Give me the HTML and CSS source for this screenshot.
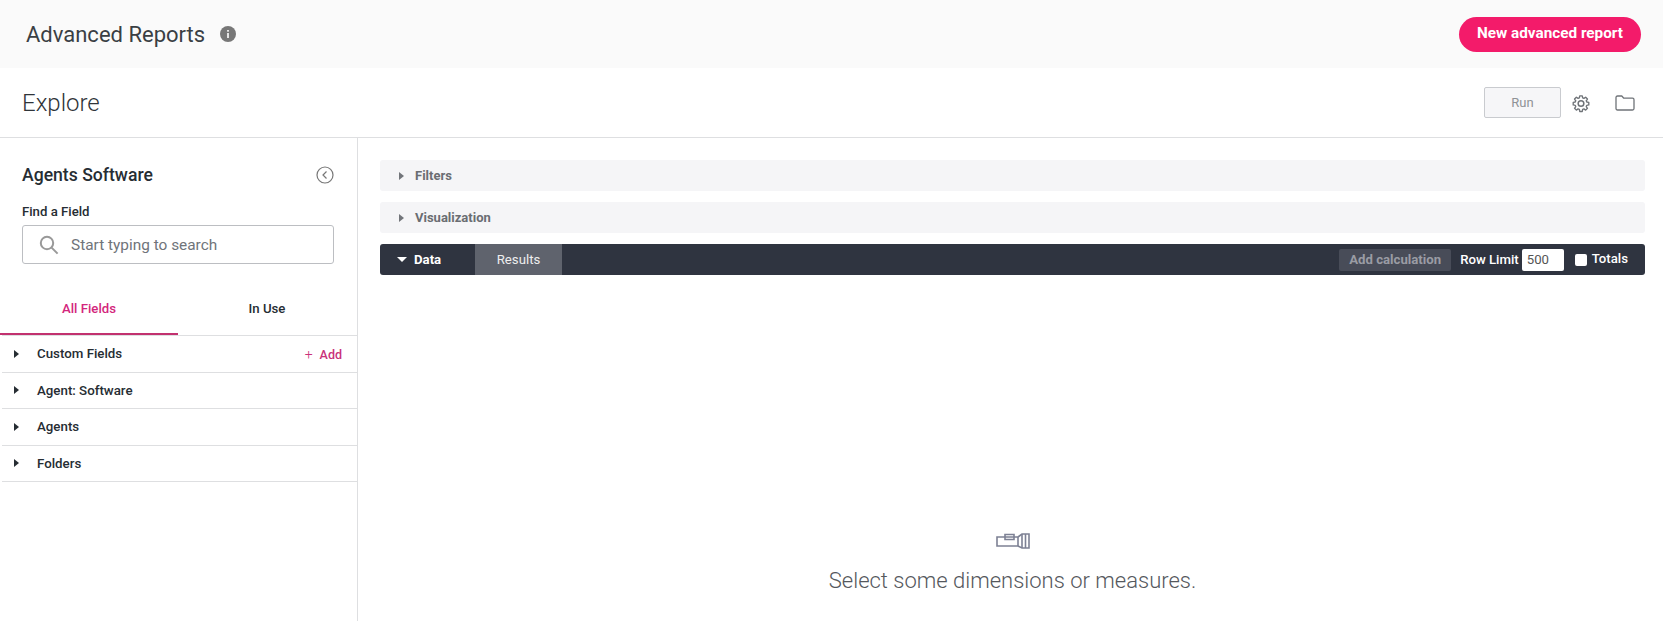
FILE: index.html
```html
<!DOCTYPE html>
<html lang="en">
<head>
  <meta charset="UTF-8">
  <meta name="viewport" content="width=device-width, initial-scale=1.0">
  <title>Advanced Reports</title>
  <link rel="stylesheet" href="styles.css">
</head>
<body>
  <div class="topbar">
    <div class="topbar-title">
      <h1>Advanced Reports</h1>
      <svg class="info" width="16" height="16" viewBox="0 0 16 16">
        <circle cx="8" cy="8" r="8" fill="#777"/>
        <rect x="7.2" y="7" width="1.6" height="5" fill="#fff"/>
        <rect x="7.2" y="4" width="1.6" height="1.7" fill="#fff"/>
      </svg>
    </div>
    <button class="new-report">New advanced report</button>
  </div>

  <div class="explore-bar">
    <h2>Explore</h2>
    <div class="explore-actions">
      <button class="run">Run</button>
      <svg class="gear" width="20" height="20" viewBox="0 0 24 24" fill="none" stroke="#6f7378" stroke-width="1.8" stroke-linejoin="round">
        <path d="M10.3 2.5h3.4l.5 2.7 1.7.7 2.3-1.6 2.4 2.4-1.6 2.3.7 1.7 2.7.5v3.4l-2.7.5-.7 1.7 1.6 2.3-2.4 2.4-2.3-1.6-1.7.7-.5 2.7h-3.4l-.5-2.7-1.7-.7-2.3 1.6-2.4-2.4 1.6-2.3-.7-1.7-2.7-.5v-3.4l2.7-.5.7-1.7-1.6-2.3 2.4-2.4 2.3 1.6 1.7-.7z" transform="translate(1.2 1.2) scale(.9)"/>
        <circle cx="12" cy="12.6" r="3.4"/>
      </svg>
      <svg class="folder" width="20" height="16" viewBox="0 0 20 16" fill="none" stroke="#6f7378" stroke-width="1.3" stroke-linejoin="round">
        <path d="M1 2.5c0-.8.6-1.5 1.5-1.5h4.3l2 2.2h8.7c.8 0 1.5.7 1.5 1.5v8.8c0 .8-.7 1.5-1.5 1.5h-15c-.9 0-1.5-.7-1.5-1.5z"/>
      </svg>
    </div>
  </div>

  <div class="content">
    <aside class="sidebar">
      <div class="sidebar-head">
        <div class="sidebar-title">
          <h3>Agents Software</h3>
          <svg width="18" height="18" viewBox="0 0 18 18" fill="none" stroke="#777" stroke-width="1.2">
            <circle cx="9" cy="9" r="8"/>
            <path d="M10.5 5.5 7 9l3.5 3.5"/>
          </svg>
        </div>
        <label class="find-label">Find a Field</label>
        <div class="search">
          <svg width="20" height="20" viewBox="0 0 20 20" fill="none" stroke="#999" stroke-width="2">
            <circle cx="8" cy="8" r="6.2"/>
            <path d="m12.6 12.6 6 6"/>
          </svg>
          <span>Start typing to search</span>
        </div>
      </div>
      <div class="tabs">
        <div class="tab active">All Fields</div>
        <div class="tab">In Use</div>
      </div>
      <ul class="fields">
        <li><span class="arrow"></span>Custom Fields<span class="add"><span class="plus">+</span>Add</span></li>
        <li><span class="arrow"></span>Agent: Software</li>
        <li><span class="arrow"></span>Agents</li>
        <li><span class="arrow"></span>Folders</li>
      </ul>
    </aside>

    <main class="main">
      <div class="panel"><span class="arrow grey"></span>Filters</div>
      <div class="panel"><span class="arrow grey"></span>Visualization</div>
      <div class="data-bar">
        <div class="data-tab"><span class="arrow-down"></span>Data</div>
        <div class="results-tab">Results</div>
        <div class="data-tools">
          <button class="add-calc">Add calculation</button>
          <span class="row-limit">Row Limit</span>
          <div class="limit-input">500</div>
          <span class="check"></span>
          <span class="totals">Totals</span>
        </div>
      </div>
      <div class="empty">
        <svg width="34" height="16" viewBox="0 0 34 16" fill="none" stroke="#7d8194" stroke-width="1.6">
          <path d="M1 4h21v9H1z"/>
          <path d="M9 4V1.5h9V6.5H9z"/>
          <path d="M22 4l4-3h7v14h-7l-4-2"/>
          <path d="M26 1v14M29.5 1v14"/>
        </svg>
        <p>Select some dimensions or measures.</p>
      </div>
    </main>
  </div>
</body>
</html>
```

FILE: styles.css
```css
* {
  box-sizing: border-box;
}
html, body {
  height: 100%;
}
body {
  margin: 0;
  display: flex;
  flex-direction: column;
  overflow: hidden;
  font-family: Roboto, "Liberation Sans", sans-serif;
  color: #262d33;
  background: #fff;
}
h1, h2, h3, p, ul {
  margin: 0;
  padding: 0;
}
button {
  font-family: inherit;
}

.topbar {
  height: 68px;
  flex: none;
  display: flex;
  align-items: center;
  justify-content: space-between;
  padding: 0 22px 0 26px;
  background: #fafafa;
}
.topbar-title {
  display: flex;
  align-items: center;
}
.topbar h1 {
  font-size: 22px;
  font-weight: 400;
  color: #3a3f44;
}
.info {
  margin-left: 15px;
}
.new-report {
  width: 182px;
  height: 35px;
  padding: 0 0 2px;
  border: none;
  border-radius: 18px;
  background: #f31b6a;
  color: #fff;
  font-size: 15.3px;
  font-weight: 700;
}

.explore-bar {
  height: 70px;
  flex: none;
  display: flex;
  align-items: center;
  justify-content: space-between;
  padding: 0 28px 0 22px;
  border-bottom: 1px solid #dedfe1;
}
.explore-bar h2 {
  font-size: 24px;
  font-weight: 300;
  color: #2f3439;
}
.explore-actions {
  display: flex;
  align-items: center;
}
.run {
  width: 77px;
  height: 31px;
  border: 1px solid #c9cbcf;
  border-radius: 2px;
  background: #f6f6f8;
  color: #8f9296;
  font-size: 13px;
}
.gear {
  margin-left: 10px;
}
.folder {
  margin-left: 24px;
}

.content {
  flex: 1;
  display: flex;
  min-height: 0;
}

.sidebar {
  width: 358px;
  flex: none;
  border-right: 1px solid #dedfe1;
}
.sidebar-head {
  padding: 26px 23px 0 22px;
}
.sidebar-title {
  display: flex;
  align-items: center;
  justify-content: space-between;
  height: 22px;
}
.sidebar-title h3 {
  font-size: 17.6px;
  font-weight: 500;
}
.find-label {
  display: block;
  margin-top: 18px;
  font-size: 13.2px;
  font-weight: 500;
  line-height: 16px;
}
.search {
  display: flex;
  align-items: center;
  height: 39px;
  margin-top: 5px;
  padding-left: 16px;
  border: 1px solid #bcbec2;
  border-radius: 3px;
  color: #70747a;
  font-size: 15.4px;
}
.search span {
  margin-left: 12px;
}

.tabs {
  display: flex;
  height: 71px;
}
.tab {
  width: 178px;
  display: flex;
  align-items: center;
  justify-content: center;
  padding: 20px 0 2px;
  font-size: 13.2px;
  font-weight: 500;
  color: #262d33;
}
.tab.active {
  padding-bottom: 0;
  color: #d3267c;
  border-bottom: 2px solid #c2316f;
}

.fields {
  list-style: none;
  margin-left: 2px;
  border-top: 1px solid #dedfe1;
}
.fields li {
  display: flex;
  align-items: center;
  height: 36.5px;
  padding: 0 15px 0 12px;
  border-bottom: 1px solid #dedfe1;
  font-size: 13.3px;
  font-weight: 500;
}
.arrow {
  width: 0;
  height: 0;
  margin-right: 18px;
  border-left: 5px solid #262d33;
  border-top: 4px solid transparent;
  border-bottom: 4px solid transparent;
}
.arrow.grey {
  margin-right: 11px;
  border-left-color: #72757a;
}
.add {
  margin-left: auto;
  color: #c9327a;
  font-size: 12.5px;
}
.plus {
  margin-right: 7px;
  font-weight: 300;
  font-size: 14px;
}

.main {
  flex: 1;
  display: flex;
  flex-direction: column;
  padding: 22px 18px 0 22px;
}
.panel {
  display: flex;
  align-items: center;
  height: 31px;
  margin-bottom: 11px;
  padding-left: 19px;
  border-radius: 3px;
  background: #f5f5f7;
  color: #6a6d72;
  font-size: 13px;
  font-weight: 700;
}
.data-bar {
  display: flex;
  align-items: center;
  height: 31px;
  border-radius: 3px;
  background: #2f3440;
  color: #fff;
  font-size: 13.2px;
  overflow: hidden;
}
.data-tab {
  width: 95px;
  display: flex;
  align-items: center;
  padding-left: 17px;
  font-weight: 700;
}
.arrow-down {
  width: 0;
  height: 0;
  margin-right: 7px;
  border-top: 5px solid #fff;
  border-left: 5px solid transparent;
  border-right: 5px solid transparent;
}
.results-tab {
  width: 87px;
  height: 100%;
  display: flex;
  align-items: center;
  justify-content: center;
  background: #5f636d;
  color: #eee;
}
.data-tools {
  margin-left: auto;
  display: flex;
  align-items: center;
  padding-right: 17px;
}
.add-calc {
  width: 112px;
  height: 22px;
  padding: 0;
  border: none;
  border-radius: 2px;
  background: #484c58;
  color: #9a9ca4;
  font-size: 13.2px;
  font-weight: 700;
}
.row-limit {
  margin-left: 9px;
  font-weight: 500;
}
.limit-input {
  width: 42px;
  height: 22px;
  margin-left: 3px;
  padding-left: 5px;
  border-radius: 2px;
  background: #fff;
  color: #555;
  line-height: 22px;
}
.check {
  width: 12px;
  height: 12px;
  margin-left: 11px;
  border-radius: 2px;
  background: #fff;
}
.totals {
  margin-left: 5px;
  font-weight: 500;
  position: relative;
  top: -1px;
}

.empty {
  margin-top: 258px;
  display: flex;
  flex-direction: column;
  align-items: center;
}
.empty p {
  margin-top: 19px;
  font-size: 22px;
  font-weight: 300;
  color: #55585d;
}
```
